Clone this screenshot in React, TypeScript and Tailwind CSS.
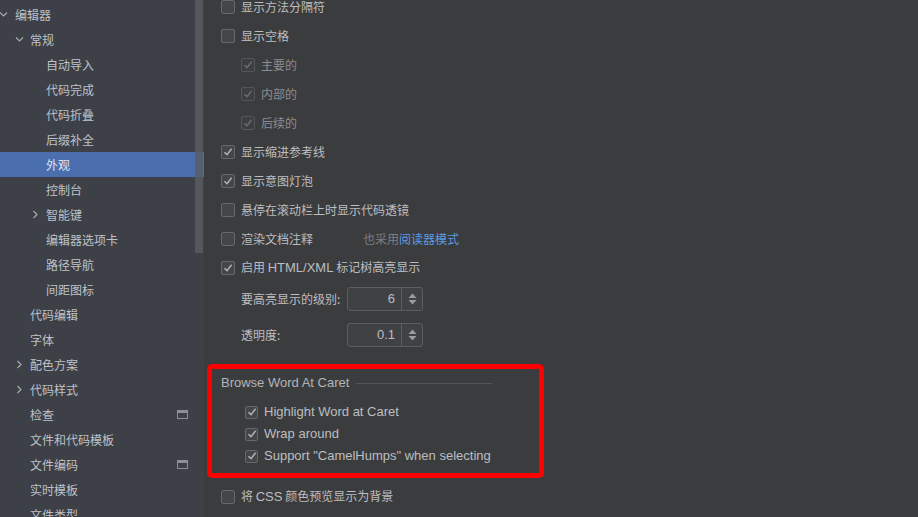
import React from "react";

const font = "font-['Noto_Sans_CJK_SC','Noto_Sans',sans-serif]";
// Latin runs are set a touch larger in an Arial-width face
const latin = "font-['Liberation_Sans',Arial,sans-serif] text-[13px]";

type NavItem = { label: string; level: number; chevron?: "down" | "right"; selected?: boolean; badge?: boolean };

const navItems: NavItem[] = [
  { label: "编辑器", level: 0, chevron: "down" },
  { label: "常规", level: 1, chevron: "down" },
  { label: "自动导入", level: 2 },
  { label: "代码完成", level: 2 },
  { label: "代码折叠", level: 2 },
  { label: "后缀补全", level: 2 },
  { label: "外观", level: 2, selected: true },
  { label: "控制台", level: 2 },
  { label: "智能键", level: 2, chevron: "right" },
  { label: "编辑器选项卡", level: 2 },
  { label: "路径导航", level: 2 },
  { label: "间距图标", level: 2 },
  { label: "代码编辑", level: 1 },
  { label: "字体", level: 1 },
  { label: "配色方案", level: 1, chevron: "right" },
  { label: "代码样式", level: 1, chevron: "right" },
  { label: "检查", level: 1, badge: true },
  { label: "文件和代码模板", level: 1 },
  { label: "文件编码", level: 1, badge: true },
  { label: "实时模板", level: 1 },
  { label: "文件类型", level: 1 },
];

// text x positions for each tree level
const textPad = ["pl-[15px]", "pl-[30px]", "pl-[46px]"];
const chevronPad = ["left-[-1px]", "left-[15px]", "left-[31px]"];

function Chevron({ dir }: { dir: "down" | "right" }) {
  return (
    <svg width="9" height="9" viewBox="0 0 9 9" className="text-[#a9adb3]">
      {dir === "down" ? (
        <path d="M1 2.5 L4.5 6 L8 2.5" fill="none" stroke="currentColor" strokeWidth="1.1" />
      ) : (
        <path d="M2.5 1 L6 4.5 L2.5 8" fill="none" stroke="currentColor" strokeWidth="1.1" />
      )}
    </svg>
  );
}

function WindowIcon() {
  return (
    <svg width="11" height="9" viewBox="0 0 11 9">
      <rect x="0.5" y="0.5" width="10" height="8" fill="none" stroke="#8c9096" />
      <rect x="1" y="1" width="9" height="2" fill="#8c9096" />
    </svg>
  );
}

function Sidebar() {
  return (
    <div className="relative w-[204px] shrink-0 bg-[#3d4047] pt-[2px]">
      {navItems.map((item) => (
        <div
          key={item.label}
          className={`relative flex h-[25px] items-center text-[12px] ${textPad[item.level]} ${
            item.selected ? "bg-[#4b6eaf] text-[#dfe3ea]" : "text-[#bfc2c7]"
          }`}
        >
          {item.chevron && (
            <span className={`absolute top-[8px] ${chevronPad[item.level]}`}>
              <Chevron dir={item.chevron} />
            </span>
          )}
          <span>{item.label}</span>
          {item.badge && (
            <span className="absolute left-[177px] top-[8px]">
              <WindowIcon />
            </span>
          )}
        </div>
      ))}
      {/* scrollbar thumb */}
      <div className="absolute right-[1px] top-0 h-[253px] w-[8px] bg-[#5a5d63]/80" />
    </div>
  );
}

function Checkbox({ checked, disabled, size = 14 }: { checked?: boolean; disabled?: boolean; size?: number }) {
  return (
    <span
      className={`flex shrink-0 items-center justify-center rounded-[2px] border ${
        disabled ? "border-[#545659] bg-[#3c3e40]" : "border-[#66686b] bg-[#43474a]"
      } ${size === 14 ? "h-[14px] w-[14px]" : "h-[13px] w-[13px]"}`}
    >
      {checked && (
        <svg width="10" height="10" viewBox="0 0 10 10">
          <path
            d="M1.5 5.2 L4 7.8 L8.6 1.8"
            fill="none"
            stroke={disabled ? "#6c6e71" : "#b5b7ba"}
            strokeWidth="1.4"
          />
        </svg>
      )}
    </span>
  );
}

function CheckRow({
  label,
  checked,
  disabled,
  indent,
  children,
}: {
  label: React.ReactNode;
  checked?: boolean;
  disabled?: boolean;
  indent?: boolean;
  children?: React.ReactNode;
}) {
  return (
    <div className={`flex h-[29px] items-center gap-[6px] ${indent ? "pl-[20px]" : ""}`}>
      <Checkbox checked={checked} disabled={disabled} />
      <span className={disabled ? "text-[#8b8d90]" : "text-[#bcbec1]"}>{label}</span>
      {children}
    </div>
  );
}

function Spinner({ label, value }: { label: string; value: string }) {
  return (
    <div className="flex h-[24px] items-center pl-[20px]">
      <span className="w-[106px] text-[#bcbec1]">{label}</span>
      <div className="flex h-[24px] w-[76px] items-stretch rounded-[3px] border border-[#5b5d60] bg-[#3f4143]">
        <div className={`flex flex-1 items-center justify-end pr-[6px] text-[#bcbec1] ${latin}`}>{value}</div>
        <div className="flex w-[21px] items-center justify-center border-l border-[#5b5d60]">
          <svg width="9" height="14" viewBox="0 0 9 14">
            <path d="M0.5 6 L4.5 1.5 L8.5 6 Z" fill="#9a9c9f" />
            <path d="M0.5 8 L4.5 12.5 L8.5 8 Z" fill="#9a9c9f" />
          </svg>
        </div>
      </div>
    </div>
  );
}

function GroupRow({ label }: { label: string }) {
  return (
    <div className="flex h-[22px] items-center gap-[6px] pl-[24px]">
      <Checkbox checked size={13} />
      <span className={`text-[#bcbec1] ${latin}`}>{label}</span>
    </div>
  );
}

export default function App() {
  return (
    <div className={`flex h-[517px] w-[918px] overflow-hidden bg-[#3b3c3e] text-[12px] ${font}`}>
      <Sidebar />
      <div className="flex-1 pl-[17px]">
        <div className="-mt-[8px]">
          <CheckRow label="显示方法分隔符" />
          <CheckRow label="显示空格" />
          <CheckRow label="主要的" checked disabled indent />
          <CheckRow label="内部的" checked disabled indent />
          <CheckRow label="后续的" checked disabled indent />
          <CheckRow label="显示缩进参考线" checked />
          <CheckRow label="显示意图灯泡" checked />
          <CheckRow label="悬停在滚动栏上时显示代码透镜" />
          <CheckRow label="渲染文档注释">
            <span className="ml-[44px] text-[#7d7f82]">
              也采用<span className="text-[#5a9ae6]">阅读器模式</span>
            </span>
          </CheckRow>
          <CheckRow
            label={
              <>
                启用 <span className={latin}>HTML/XML</span> 标记树高亮显示
              </>
            }
            checked
          />
        </div>
        <div className="mt-[5px] flex flex-col gap-[12px]">
          <Spinner label="要高亮显示的级别:" value="6" />
          <Spinner label="透明度:" value="0.1" />
        </div>
        <div className="-ml-[14px] mt-[17px] w-[337px] rounded-[5px] border-[5px] border-[#ff0000] pb-[6px] pl-[9px] pt-[1px]">
          <div className="flex h-[26px] items-center">
            <span className={`text-[#b3b5b8] ${latin}`}>Browse Word At Caret</span>
            <div className="ml-[7px] mr-[47px] h-px flex-1 bg-[#515356]" />
          </div>
          <div className="mt-[5px]">
            <GroupRow label="Highlight Word at Caret" />
            <GroupRow label="Wrap around" />
            <GroupRow label={'Support "CamelHumps" when selecting'} />
          </div>
        </div>
        <div className="mt-[4px]">
          <CheckRow
            label={
              <>
                将 <span className={latin}>CSS</span> 颜色预览显示为背景
              </>
            }
          />
        </div>
      </div>
    </div>
  );
}
